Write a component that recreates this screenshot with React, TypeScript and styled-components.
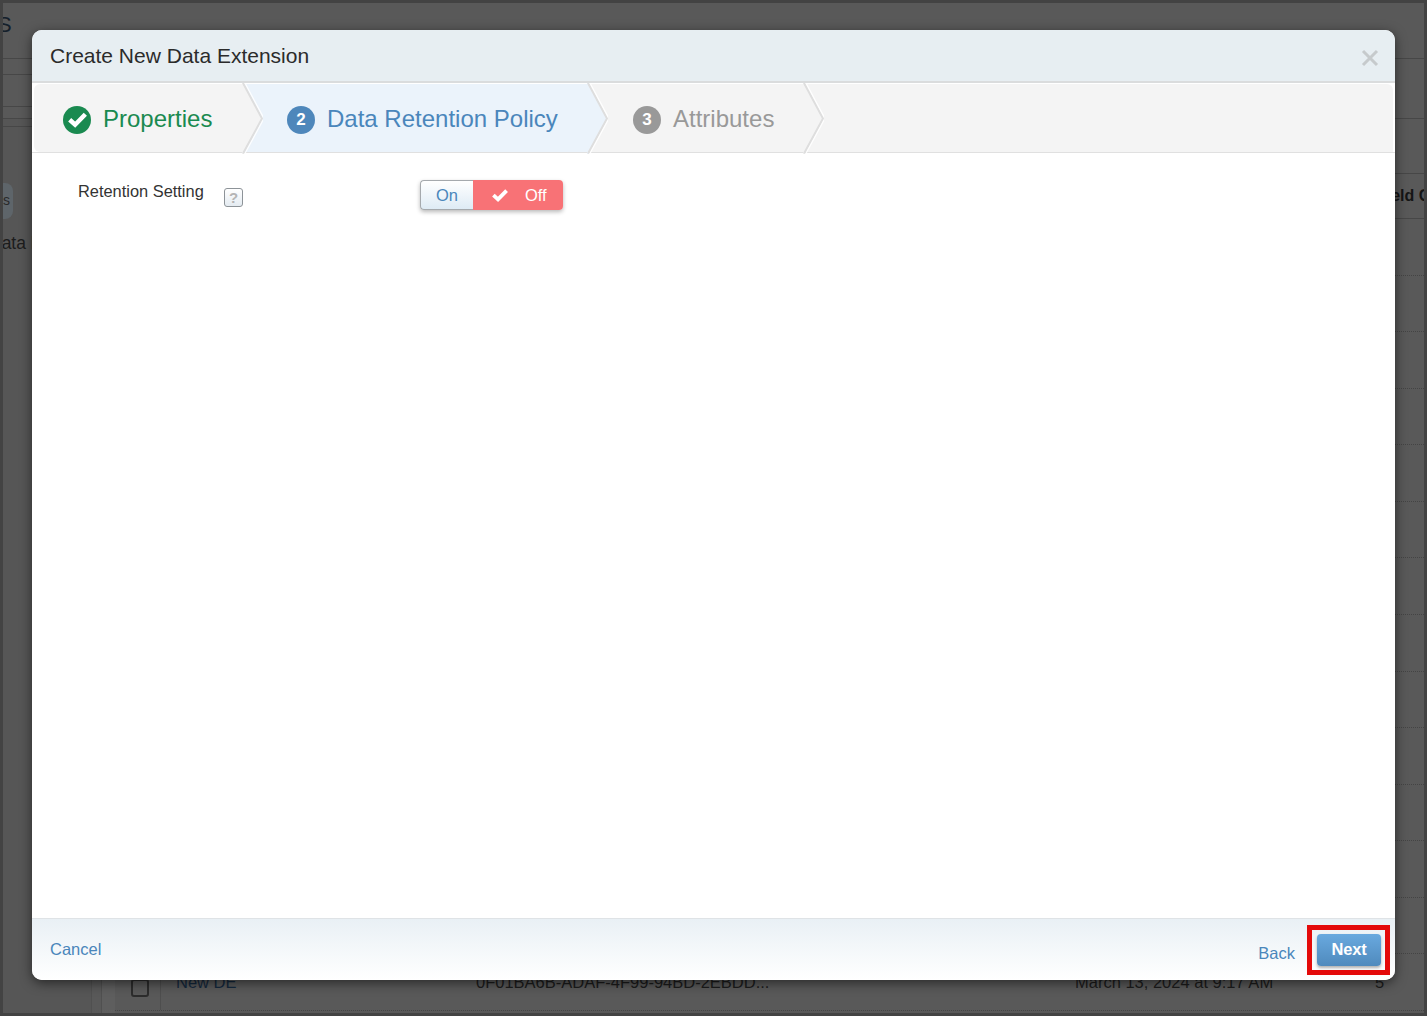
import React from "react";
import styled, { createGlobalStyle } from "styled-components";

const Global = createGlobalStyle`
  html, body { margin: 0; padding: 0; height: 100%; }
  body { font-family: "Liberation Sans", Arial, sans-serif; background: #595959; overflow: hidden; }
`;

const Screen = styled.div`
  position: relative;
  box-sizing: border-box;
  width: 1427px;
  height: 1016px;
  overflow: hidden;
  background: #595959;
  border: 3px solid #434343;
  color: #1c1c1c;
`;

const PageTitle = styled.div`
  height: 56px;
  box-sizing: border-box;
  border-bottom: 1px solid #474747;
  font-size: 22px;
  line-height: 44px;
  margin-left: -6px;
  color: #15202b;
`;

const Toolbar = styled.div`
  height: 60px;
  box-sizing: border-box;
  border-bottom: 1px solid #474747;
  padding-top: 15px;
`;

const ToolbarLeft = styled.div`
  width: 100px;
  height: 33px;
  box-sizing: border-box;
  border-top: 1px solid #474747;
  border-bottom: 1px solid #474747;
`;

const Body = styled.div`
  display: flex;
  height: 895px;
`;

const SideColumn = styled.div`
  width: 89px;
  flex: none;
  box-sizing: border-box;
  border-right: 1px solid #505050;
  background: #565656;
`;

const SideRule = styled.div`
  height: 8px;
  box-sizing: border-box;
  border-bottom: 1px solid #474747;
`;

const SidePill = styled.div`
  width: 10px;
  height: 36px;
  margin-top: 56px;
  background: #5e656a;
  border-radius: 0 8px 8px 0;
  font-size: 14px;
  line-height: 34px;
  overflow: hidden;
  color: #2a2a2a;
`;

const SideLabel = styled.div`
  margin-top: 14px;
  margin-left: -14px;
  font-size: 17.5px;
  line-height: 20px;
  white-space: nowrap;
  color: #1c1c1c;
`;

const Gutter = styled.div`
  width: 23px;
  flex: none;
  display: flex;
`;

const GutterInner = styled.div`
  margin-left: 9px;
  flex: 1;
  border-left: 1px solid #505050;
  background: #5e5e5e;
`;

const Table = styled.div`
  flex: 1;
  min-width: 0;
  padding-top: 54px;
`;

const HeadRow = styled.div`
  height: 46px;
  box-sizing: border-box;
  padding-left: 1262px;
  border-top: 1px solid #474747;
  border-bottom: 1px solid #474747;
  font-size: 16px;
  font-weight: 700;
  line-height: 44px;
  white-space: nowrap;
  overflow: hidden;
  color: #151515;
`;

const Row = styled.div`
  display: flex;
  align-items: center;
  height: 56.57px;
  box-sizing: border-box;
  border-bottom: 1px dotted #444;
  font-size: 16.5px;
  white-space: nowrap;
  color: #1c1c1c;
`;

const CheckCell = styled.div`
  display: flex;
  align-items: center;
  align-self: stretch;
  width: 46px;
  box-sizing: border-box;
  flex: none;
  padding-left: 16px;
  border-right: 1px solid #4e4e4e;
`;

const Check = styled.span`
  width: 18px;
  height: 18px;
  box-sizing: border-box;
  margin-top: 12px;
  border: 2px solid #2c2c2c;
  border-radius: 3px;
`;

const RowLink = styled.span`
  width: 300px;
  margin-left: 15px;
  flex: none;
  color: #14283d;
`;

const RowId = styled.span`
  width: 599px;
  flex: none;
`;

const RowDate = styled.span`
  width: 300px;
  flex: none;
`;

const Modal = styled.div`
  position: absolute;
  left: 29px;
  top: 27px;
  width: 1363px;
  height: 950px;
  display: flex;
  flex-direction: column;
  background: #fff;
  border-radius: 10px;
  box-shadow: 0 3px 12px rgba(0, 0, 0, 0.55);
  overflow: hidden;
`;

const Header = styled.header`
  display: flex;
  align-items: center;
  justify-content: space-between;
  height: 53px;
  flex: none;
  box-sizing: border-box;
  padding: 0 16px 0 18px;
  background: #e7eef2;
  border-bottom: 2px solid #dadcdd;
`;

const Title = styled.h1`
  margin: 0;
  font-size: 21px;
  line-height: 52px;
  font-weight: 400;
  color: #2b2b2b;
`;

const Close = styled.svg`
  display: block;
  margin-top: 5px;
`;

const Steps = styled.nav`
  display: flex;
  height: 70px;
  flex: none;
  box-sizing: border-box;
  padding: 1px 2px 0 2px;
  background: #fff;
  border-bottom: 1px solid #e0e0e0;
`;

const StepTrack = styled.div`
  display: flex;
  flex: 1;
  background: #f4f4f4;
  border-radius: 6px 6px 0 6px;
`;

const Step = styled.div<{ $width: number; $active?: boolean; $pad: number }>`
  position: relative;
  display: flex;
  align-items: center;
  box-sizing: border-box;
  flex: none;
  width: ${(p) => p.$width}px;
  padding-left: ${(p) => p.$pad}px;
  padding-top: 3px;
  background: ${(p) => (p.$active ? "#ebf3fb" : "transparent")};
  color: ${(p) => (p.$active ? "#ebf3fb" : "#f4f4f4")};
`;

const Chevron = styled.svg`
  position: absolute;
  right: -20px;
  top: -1px;
  z-index: 1;
`;

const Bullet = styled.span<{ $color: string }>`
  display: flex;
  align-items: center;
  justify-content: center;
  width: 28px;
  height: 28px;
  flex: none;
  border-radius: 50%;
  background: ${(p) => p.$color};
  color: #fff;
  font-size: 17px;
  font-weight: 700;
`;

const StepLabel = styled.span<{ $color: string }>`
  margin-left: 12px;
  margin-top: -2px;
  font-size: 24px;
  white-space: nowrap;
  color: ${(p) => p.$color};
`;

const Content = styled.main`
  flex: 1;
  display: flex;
  align-items: flex-start;
  padding: 27px 0 0 46px;
`;

const FieldLabel = styled.label`
  width: 146px;
  flex: none;
  font-size: 16.4px;
  line-height: 22px;
  color: #333;
`;

const Help = styled.span`
  display: flex;
  align-items: center;
  justify-content: center;
  width: 19px;
  height: 19px;
  margin-top: 8px;
  flex: none;
  box-sizing: border-box;
  border: 1px solid #8d9398;
  border-radius: 3px;
  background: linear-gradient(#ffffff, #e4ebf1);
  font-size: 15px;
  font-weight: 700;
  color: #b5b5b5;
`;

const Toggle = styled.div`
  display: flex;
  height: 30px;
  margin-left: 177px;
  border-radius: 4px;
  box-shadow: 0 2px 4px rgba(0, 0, 0, 0.28);
`;

const ToggleOn = styled.button`
  width: 53px;
  padding: 0;
  box-sizing: border-box;
  border: 1px solid #a5a9ad;
  border-right: 0;
  border-radius: 4px 0 0 4px;
  background: linear-gradient(#ffffff, #deebf5);
  font: 16.5px "Liberation Sans", Arial, sans-serif;
  color: #4a86bb;
`;

const ToggleOff = styled.button`
  display: flex;
  align-items: center;
  width: 90px;
  padding: 0 0 0 19px;
  box-sizing: border-box;
  border: 0;
  border-radius: 0 4px 4px 0;
  background: #f87276;
  font: 16.5px "Liberation Sans", Arial, sans-serif;
  color: #fff;
`;

const OffText = styled.span`
  margin-left: 17px;
`;

const Footer = styled.footer`
  position: relative;
  display: flex;
  align-items: center;
  justify-content: space-between;
  height: 62px;
  flex: none;
  box-sizing: border-box;
  padding: 0 14px 0 18px;
  border-top: 1px solid #dfe3e6;
  background: linear-gradient(#e9f0f5, #ffffff);
`;

const LinkText = styled.a`
  font-size: 16.5px;
  color: #4a86bb;
`;

const FooterRight = styled.div`
  display: flex;
  align-items: center;
`;

const BackLink = styled(LinkText)`
  margin-top: 8px;
  margin-right: 22px;
`;

const Highlight = styled.div`
  position: absolute;
  right: 5px;
  bottom: 5px;
  width: 83px;
  height: 50px;
  box-sizing: border-box;
  border: 5px solid #e40a0a;
`;

const NextButton = styled.button`
  width: 64px;
  height: 32px;
  padding: 0;
  border: 0;
  border-radius: 4px;
  background: linear-gradient(#69a9df, #4f8abd);
  box-shadow: 0 2px 3px rgba(0, 0, 0, 0.3);
  font: 700 16.5px "Liberation Sans", Arial, sans-serif;
  letter-spacing: -0.2px;
  color: #fff;
`;

function CheckMark({ size }: { size: number }) {
  return (
    <svg width={size} height={size} viewBox="0 0 16 16" aria-hidden="true">
      <path d="M1.4 8.2 L6 12.4 L14.6 3.6" fill="none" stroke="#fff" strokeWidth="3.8" />
    </svg>
  );
}

function StepArrow() {
  return (
    <Chevron width="21" height="71" viewBox="0 0 21 71" aria-hidden="true">
      <path d="M0 0 L0 71 L1 71 L20 35.5 L1 0 Z" fill="currentColor" />
      <path d="M1 0 L20 35.5 L1 70.5" fill="none" stroke="#dedede" strokeWidth="2" />
      <path d="M3 0 L22 35.5 L3 70.5" fill="none" stroke="#fff" strokeWidth="1.2" opacity="0.9" />
    </Chevron>
  );
}

export default function App() {
  const rows = Array.from({ length: 13 });
  return (
    <Screen>
      <Global />
      <PageTitle>S</PageTitle>
      <Toolbar>
        <ToolbarLeft />
      </Toolbar>
      <Body>
        <SideColumn>
          <SideRule />
          <SidePill>s</SidePill>
          <SideLabel>Data Lists</SideLabel>
        </SideColumn>
        <Gutter>
          <GutterInner />
        </Gutter>
        <Table>
          <HeadRow>Field Count</HeadRow>
          {rows.map((_, i) => (
            <Row key={i} />
          ))}
          <Row>
            <CheckCell>
              <Check />
            </CheckCell>
            <RowLink>New DE</RowLink>
            <RowId>0F01BA6B-ADAF-4F99-94BD-2EBDD...</RowId>
            <RowDate>March 13, 2024 at 9:17 AM</RowDate>
            <span>5</span>
          </Row>
        </Table>
      </Body>

      <Modal>
        <Header>
          <Title>Create New Data Extension</Title>
          <Close width="18" height="18" viewBox="0 0 18 18" aria-label="Close">
            <path d="M2 2 L16 16 M16 2 L2 16" stroke="#c6cacc" strokeWidth="3" />
          </Close>
        </Header>
        <Steps>
          <StepTrack>
            <Step $width={209} $pad={29}>
              <Bullet $color="#1a8a50">
                <CheckMark size={19} />
              </Bullet>
              <StepLabel $color="#1a8a50">Properties</StepLabel>
              <StepArrow />
            </Step>
            <Step $width={345} $pad={44} $active>
              <Bullet $color="#4e87bb">2</Bullet>
              <StepLabel $color="#4a86bb">Data Retention Policy</StepLabel>
              <StepArrow />
            </Step>
            <Step $width={216} $pad={45}>
              <Bullet $color="#999">3</Bullet>
              <StepLabel $color="#999">Attributes</StepLabel>
              <StepArrow />
            </Step>
          </StepTrack>
        </Steps>
        <Content>
          <FieldLabel>Retention Setting</FieldLabel>
          <Help>?</Help>
          <Toggle>
            <ToggleOn>On</ToggleOn>
            <ToggleOff>
              <CheckMark size={16} />
              <OffText>Off</OffText>
            </ToggleOff>
          </Toggle>
        </Content>
        <Footer>
          <LinkText>Cancel</LinkText>
          <FooterRight>
            <BackLink>Back</BackLink>
            <NextButton>Next</NextButton>
          </FooterRight>
          <Highlight />
        </Footer>
      </Modal>
    </Screen>
  );
}
